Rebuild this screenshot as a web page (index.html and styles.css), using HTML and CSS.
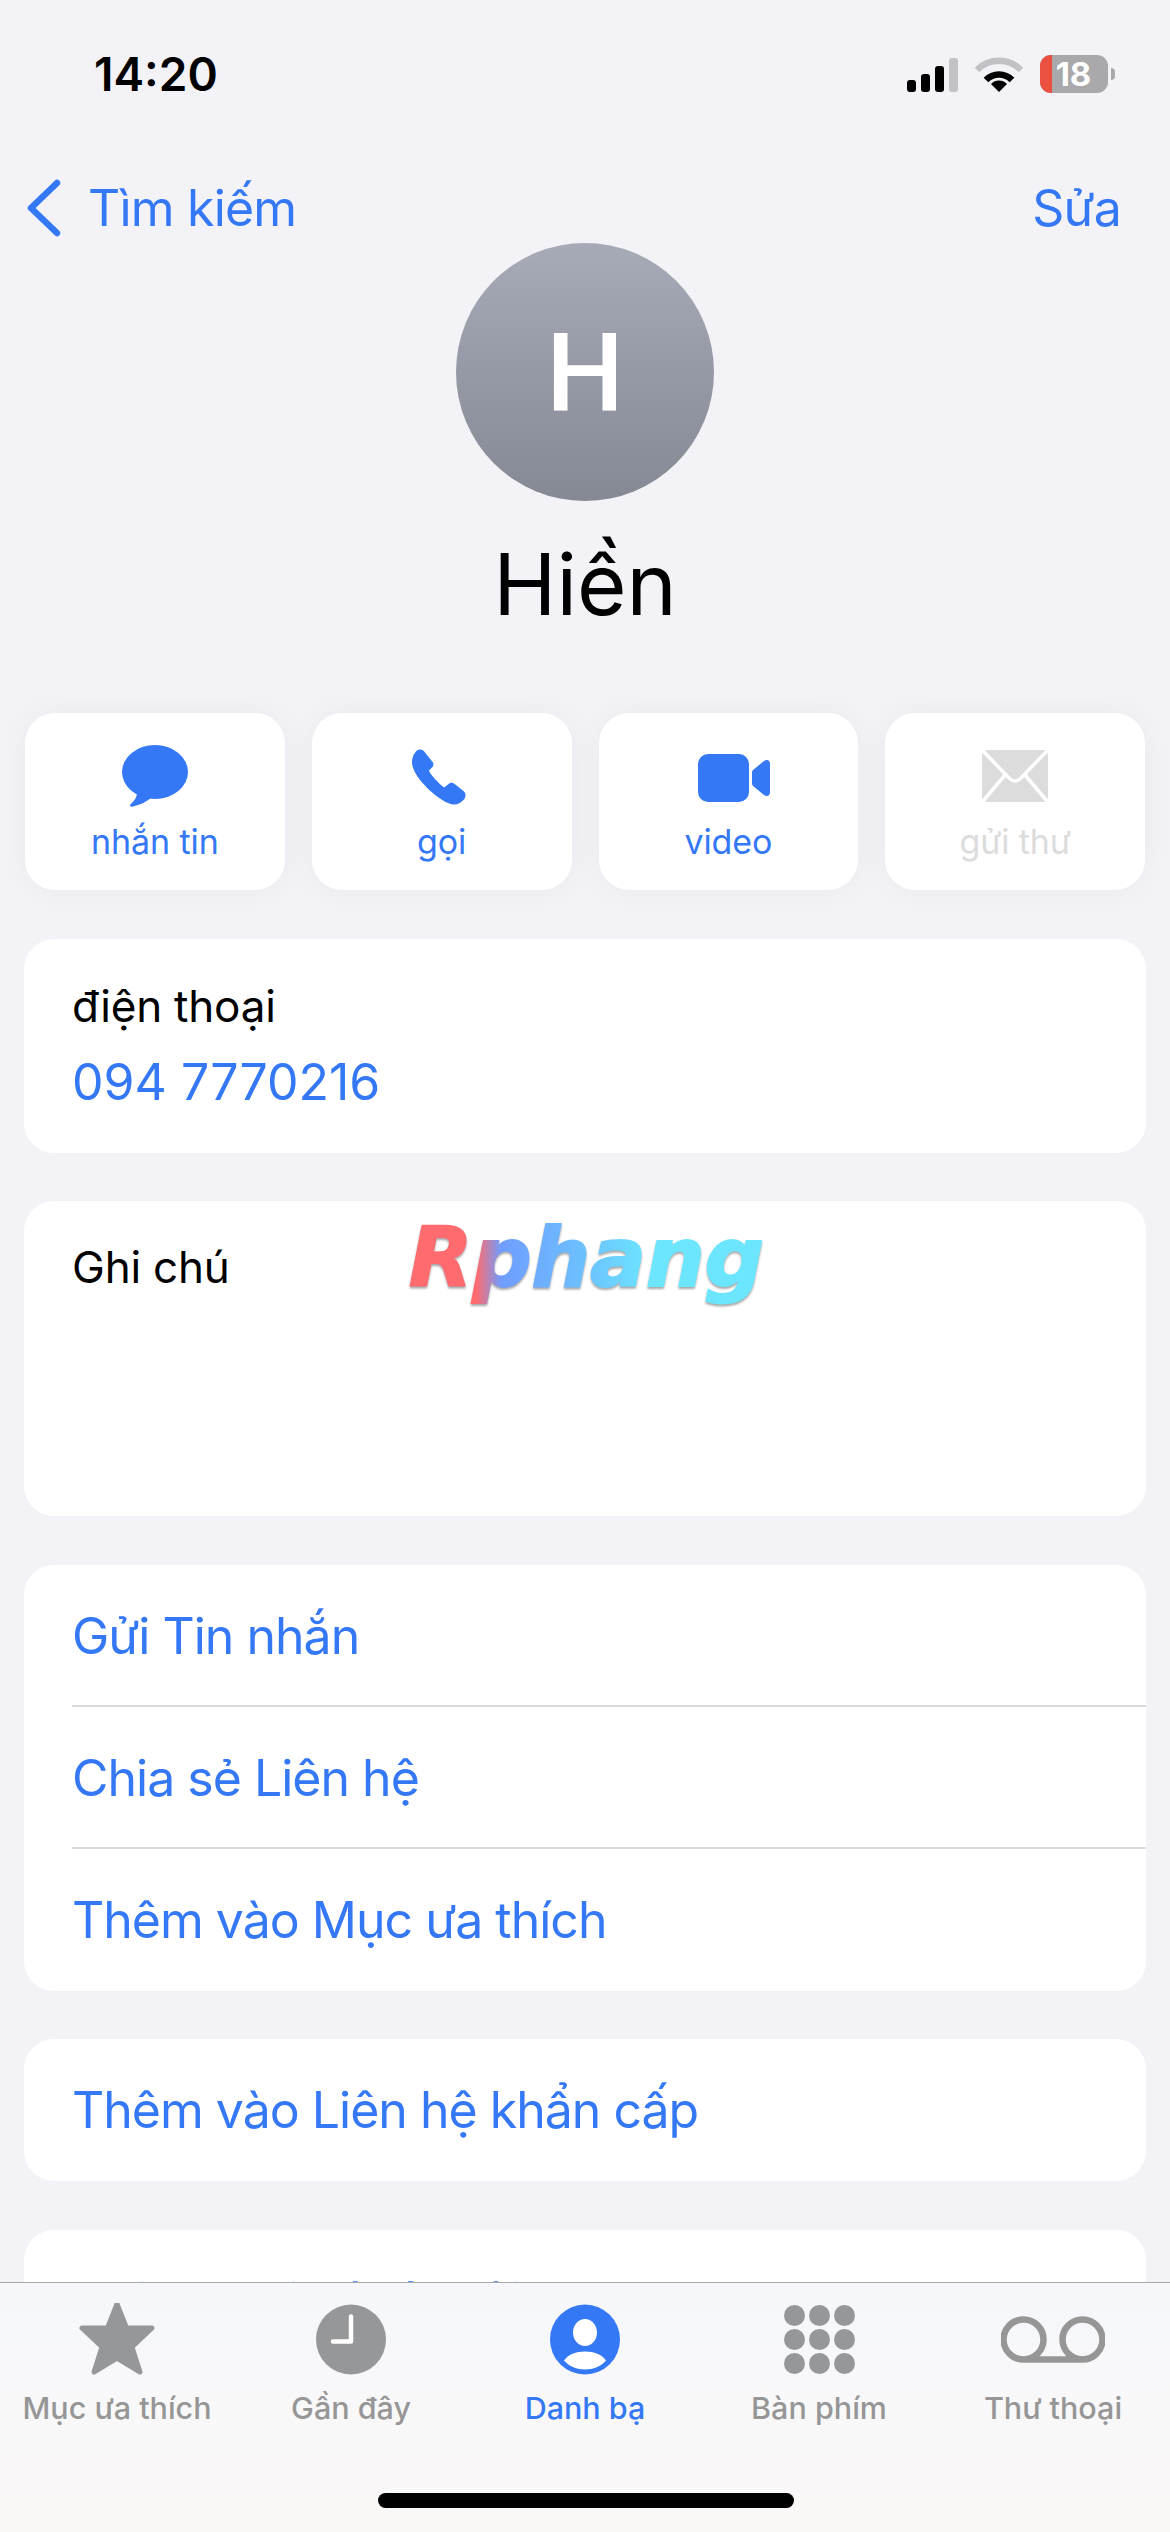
FILE: index.html
```html
<!DOCTYPE html>
<html lang="vi">
<head>
  <meta charset="UTF-8" />
  <title>Hiền</title>
  <meta name="viewport" content="width=device-width, initial-scale=1.0" />
  <link rel="stylesheet" href="styles.css">
</head>
<body>

  <header class="status">
    <span class="time">14:20</span>
    <div class="status-icons">
      <svg class="signal" width="51" height="34" viewBox="0 0 51 34">
        <rect x="0" y="22" width="9" height="12" rx="3" />
        <rect x="14" y="16" width="9" height="18" rx="3" />
        <rect x="28" y="8" width="9" height="26" rx="3" />
        <rect class="off" x="42" y="0" width="9" height="34" rx="3" />
      </svg>
      <svg class="wifi" width="48" height="36" viewBox="0 0 48 36">
        <path class="off" d="M2 14 A31 31 0 0 1 46 14" />
        <path d="M11 24 A18 18 0 0 1 37 24" />
        <path class="wedge" d="M24 36 L16 28 A11 11 0 0 1 32 28 Z" />
      </svg>
      <div class="battery">
        <span class="battery-low"></span>
        <span class="battery-num">18</span>
      </div>
      <span class="battery-nub"></span>
    </div>
  </header>

  <nav class="topnav">
    <a class="back">
      <svg width="34" height="58" viewBox="0 0 34 58">
        <path d="M30 4 L4 29 L30 54" />
      </svg>
      <span>Tìm kiếm</span>
    </a>
    <a class="edit">Sửa</a>
  </nav>

  <main>
    <div class="avatar">H</div>
    <h1 class="name">Hiền</h1>

    <div class="actions">
      <div class="action">
        <svg width="68" height="62" viewBox="0 0 68 62">
          <ellipse cx="34" cy="27" rx="33" ry="27" />
          <path d="M16 48 C16 53 12 57 9 60 C9 61.5 10 62 12 61.5 C19 60 25 57 30 53 Z" />
        </svg>
        <span>nhắn tin</span>
      </div>
      <div class="action">
        <svg width="60" height="55" viewBox="0 -1 60 55">
          <path d="M0 13 C0 6 4 0 8 0 C10 0 12 1 13 3 L21 13 C22 15 21 17 20 18 L17 21 C18 25 28 35 32 38 L36 35 C38 33 40 33 42 34 L52 42 C54 44 54 47 52 50 C49 53 46 55 42 55 C30 55 0 28 0 13 Z" />
        </svg>
        <span>gọi</span>
      </div>
      <div class="action">
        <svg width="84" height="48" viewBox="-12 -2 84 48">
          <rect x="0" y="0" width="51" height="48" rx="10" />
          <path d="M55 16 L66 7 C69 5 72 6 72 10 L72 38 C72 42 69 43 66 41 L55 32 C54 31 54 30 54 29 L54 19 C54 18 54 17 55 16 Z" />
        </svg>
        <span>video</span>
      </div>
      <div class="action disabled">
        <svg width="66" height="52" viewBox="0 0 66 52">
          <rect x="0" y="0" width="66" height="52" rx="5" />
          <path class="cut" d="M1 1 L28 29 Q33 33 38 29 L65 1 M1 51 L23 25 M65 51 L43 25" />
        </svg>
        <span>gửi thư</span>
      </div>
    </div>

    <section class="card phone">
      <div class="label">điện thoại</div>
      <div class="link">094 7770216</div>
    </section>

    <section class="card notes">
      <div class="label">Ghi chú</div>
      <div class="watermark">Rphang</div>
    </section>

    <section class="card list">
      <div class="row link">Gửi Tin nhắn</div>
      <div class="row link">Chia sẻ Liên hệ</div>
      <div class="row link">Thêm vào Mục ưa thích</div>
    </section>

    <section class="card list">
      <div class="row link">Thêm vào Liên hệ khẩn cấp</div>
    </section>

    <section class="card list">
      <div class="row link">Chia sẻ Vị trí của tôi</div>
    </section>
  </main>

  <footer class="tabbar">
    <div class="tabs">
      <div class="tab">
        <svg width="76" height="73" viewBox="0 0 76 73">
          <polygon class="star" points="38,1 47.5,25 73,25 53,44 61,69 38,55 15,69 23,44 3,25 28.5,25" />
        </svg>
        <span>Mục ưa thích</span>
      </div>
      <div class="tab">
        <svg width="70" height="70" viewBox="0 0 70 70">
          <circle class="clock" cx="35" cy="35" r="35" />
          <path class="hand" d="M35 12 L35 37 L17 37" />
        </svg>
        <span>Gần đây</span>
      </div>
      <div class="tab active">
        <svg width="70" height="70" viewBox="0 0 70 70">
          <circle cx="35" cy="35" r="35" />
          <ellipse class="white" cx="35" cy="28" rx="12" ry="13.5" />
          <path class="white" d="M14 56 C18 50 26 47 35 47 C44 47 52 50 56 56 C51 62 43 65 35 65 C27 65 19 62 14 56 Z" />
        </svg>
        <span>Danh bạ</span>
      </div>
      <div class="tab">
        <svg width="71" height="70" viewBox="0 0 71 70">
          <circle cx="10.5" cy="11" r="10.5" /><circle cx="35.5" cy="11" r="10.5" /><circle cx="60.5" cy="11" r="10.5" />
          <circle cx="10.5" cy="35" r="10.5" /><circle cx="35.5" cy="35" r="10.5" /><circle cx="60.5" cy="35" r="10.5" />
          <circle cx="10.5" cy="59" r="10.5" /><circle cx="35.5" cy="59" r="10.5" /><circle cx="60.5" cy="59" r="10.5" />
        </svg>
        <span>Bàn phím</span>
      </div>
      <div class="tab">
        <svg class="voicemail" width="104" height="70" viewBox="0 0 104 70">
          <path d="M22.5 55 A19.5 19.5 0 1 1 22.5 15 A19.5 19.5 0 1 1 22.5 55 L81.5 55 A19.5 19.5 0 1 1 81.5 15 A19.5 19.5 0 1 1 81.5 55" />
        </svg>
        <span>Thư thoại</span>
      </div>
    </div>
    <div class="home-bar"></div>
  </footer>

</body>
</html>
```

FILE: styles.css
```css
html, body {
  margin: 0;
  padding: 0;
}

body {
  position: relative;
  width: 1170px;
  height: 2532px;
  overflow: hidden;
  background: #f2f2f7;
  font-family: Inter, "Noto Sans", sans-serif;
  color: #000;
}

/* status bar */
.status {
  height: 172px;
  box-sizing: border-box;
  padding: 0 55px 0 94px;
  display: flex;
  justify-content: space-between;
  align-items: flex-start;
}

.time {
  margin-top: 44px;
  font-size: 46px;
  line-height: 60px;
  font-weight: 600;
}

.status-icons {
  margin-top: 55px;
  display: flex;
  align-items: flex-start;
}

.signal {
  margin-top: 3px;
  fill: #000;
}

.signal .off {
  fill: #c1c1c6;
}

.wifi {
  margin-top: 1px;
  margin-left: 17px;
  fill: none;
  stroke: #000;
  stroke-width: 6.5;
}

.wifi .off {
  stroke: #c1c1c6;
}

.wifi .wedge {
  fill: #000;
  stroke: none;
}

.battery {
  position: relative;
  margin-left: 17px;
  width: 68px;
  height: 38px;
  border-radius: 11px;
  overflow: hidden;
  background: #a9a9ab;
}

.battery-low {
  display: block;
  width: 12px;
  height: 100%;
  background: #ec5040;
}

.battery-num {
  position: absolute;
  left: 12px;
  right: 13px;
  top: 0;
  text-align: center;
  color: #fff;
  font-size: 33px;
  line-height: 38px;
  font-weight: 700;
}

.battery-nub {
  margin: 13px 0 0 3px;
  width: 4px;
  height: 12px;
  border-radius: 0 6px 6px 0;
  background: #a9a9ab;
}

/* top nav */
.topnav {
  height: 71px;
  box-sizing: border-box;
  padding: 0 49px 0 27px;
  display: flex;
  justify-content: space-between;
  align-items: center;
  color: #3478f6;
  font-size: 50px;
  letter-spacing: -0.8px;
}

.back {
  display: flex;
  align-items: center;
  gap: 27px;
}

.back svg {
  fill: none;
  stroke: #3478f6;
  stroke-width: 6.5;
  stroke-linecap: round;
  stroke-linejoin: round;
}

/* header */
.avatar {
  width: 258px;
  height: 258px;
  margin: 0 auto;
  border-radius: 50%;
  background: linear-gradient(#a7aab7, #858994);
  color: #fff;
  font-family: Roboto, sans-serif;
  font-size: 110px;
  font-weight: 500;
  line-height: 262px;
  text-align: center;
}

.name {
  margin: 29px 0 73px 0;
  font-size: 85px;
  font-weight: 400;
  line-height: 110px;
  text-align: center;
}

/* the four buttons */
.actions {
  display: grid;
  grid-template-columns: repeat(4, 1fr);
  gap: 27px;
  padding: 0 25px;
  margin-bottom: 1.5px;
}

.action {
  position: relative;
  height: 177px;
  border-radius: 30px;
  background: #fff;
  box-shadow: 0 0 34px rgba(0, 0, 0, 0.045);
  display: flex;
  flex-direction: column;
  align-items: center;
  color: #3478f6;
  font-size: 34px;
  letter-spacing: -0.1px;
}

.action svg {
  fill: #3478f6;
  height: 62px;
  margin-top: 32px;
}

.action span {
  margin-top: 15px;
  line-height: 40px;
}

.action.disabled {
  color: #dcdcdc;
}

.action.disabled svg {
  fill: #dcdcdc;
}

.action .cut {
  fill: none;
  stroke: #fff;
  stroke-width: 3.5;
}

/* cards */
.card {
  position: relative;
  margin: 48.5px 24px 0 24px;
  border-radius: 30px;
  background: #fff;
  overflow: hidden;
}

.link {
  color: #3478f6;
}

.label {
  font-size: 44px;
  letter-spacing: -0.2px;
  line-height: 52px;
}

.phone {
  height: 214px;
  box-sizing: border-box;
  padding: 41px 49px 0 48px;
}

.phone .link {
  margin-top: 20px;
  font-size: 50px;
  line-height: 60px;
}

.notes {
  height: 315px;
  box-sizing: border-box;
  padding: 40px 49px 0 48px;
  overflow: visible;
}

.watermark {
  position: absolute;
  left: 385px;
  top: 6px;
  font-family: "DejaVu Sans", sans-serif;
  font-size: 82.5px;
  font-weight: 700;
  font-style: italic;
  line-height: 100px;
  background: linear-gradient(90deg, #ff6b6f 0, #ff6b6f 19%, #6f9dff 26%, #6cc2ff 50%, #6ce6ff 68%, #6ce6ff 100%);
  -webkit-background-clip: text;
  background-clip: text;
  color: transparent;
  -webkit-text-stroke: 2px transparent;
  filter: drop-shadow(0 2px 1px rgba(0, 0, 0, 0.35));
}

.row {
  height: 142px;
  box-sizing: border-box;
  margin-left: 48px;
  border-bottom: 2px solid #d9d9dd;
  font-size: 50px;
  letter-spacing: -1px;
  line-height: 142px;
}

.row:last-child {
  border-bottom: none;
}

/* tab bar lies over the scrolled list */
.tabbar {
  position: absolute;
  left: 0;
  right: 0;
  bottom: 0;
  height: 250px;
  box-sizing: border-box;
  border-top: 1px solid #a9a9a9;
  background: linear-gradient(#f5f7fb, #f9f8f9 55%, #faf7f6);
}

.tabs {
  display: grid;
  grid-template-columns: repeat(5, 1fr);
}

.tab {
  display: flex;
  flex-direction: column;
  align-items: center;
  color: #969696;
  font-size: 30.5px;
  font-weight: 500;
}

.tab svg {
  margin-top: 20px;
  height: 73px;
  fill: #969799;
}

.tab span {
  margin-top: 12px;
  line-height: 40px;
  white-space: nowrap;
}

.tab .star {
  stroke: #969799;
  stroke-width: 5;
  stroke-linejoin: round;
}

.tab .hand {
  fill: none;
  stroke: #fff;
  stroke-width: 4.5;
  stroke-linecap: round;
  stroke-linejoin: round;
}

.tab .voicemail {
  fill: none;
  stroke: #969696;
  stroke-width: 6.5;
}

.tab.active {
  color: #3478f6;
}

.tab.active svg {
  fill: #3478f6;
}

.tab.active .white {
  fill: #fff;
}

.home-bar {
  position: absolute;
  left: 378px;
  bottom: 24px;
  width: 416px;
  height: 15px;
  border-radius: 8px;
  background: #000;
}
```
